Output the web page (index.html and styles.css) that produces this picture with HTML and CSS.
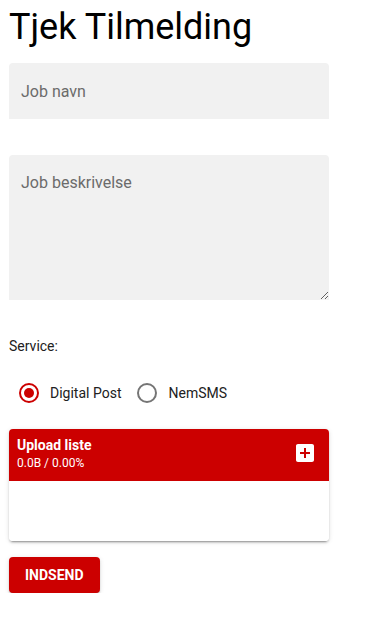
FILE: index.html
```html
<!doctype html>
<html lang="da">
  <head>
    <meta charset="UTF-8" />
    <title>Tjek Tilmelding</title>
    <link rel="stylesheet" href="styles.css">
  </head>
  <body>
    <h1>Tjek Tilmelding</h1>
    <form class="form">
      <input class="field" type="text" placeholder="Job navn" />
      <textarea class="field field-area" placeholder="Job beskrivelse"></textarea>

      <div class="service-label">Service:</div>
      <div class="radio-row">
        <label class="radio">
          <span class="radio-hit"><input type="radio" name="service" checked /></span>
          <span>Digital Post</span>
        </label>
        <label class="radio">
          <span class="radio-hit"><input type="radio" name="service" /></span>
          <span>NemSMS</span>
        </label>
      </div>

      <div class="upload-card">
        <div class="upload-header">
          <div>
            <div class="upload-title">Upload liste</div>
            <div class="upload-progress">0.0B / 0.00%</div>
          </div>
          <button type="button" class="add-button" aria-label="Tilføj fil">
            <svg width="24" height="24" viewBox="0 0 24 24">
              <path fill="#fff" d="M19 3H5c-1.11 0-2 .9-2 2v14c0 1.1.89 2 2 2h14c1.1 0 2-.9 2-2V5c0-1.1-.9-2-2-2zm-2 10h-4v4h-2v-4H7v-2h4V7h2v4h4v2z"/>
            </svg>
          </button>
        </div>
        <div class="upload-body"></div>
      </div>

      <button type="button" class="submit-button">Indsend</button>
    </form>
  </body>
</html>
```

FILE: styles.css
```css
:root {
  --primary-color: #cc0000;
  --field-bg: #f1f1f1;
  --text-color: #212121;
  --placeholder: #6b6b6b;
}

* {
  box-sizing: border-box;
  margin: 0;
  padding: 0;
}

body {
  font-family: Roboto, "Liberation Sans", Arial, sans-serif;
  color: var(--text-color);
  background: white;
  padding: 0 9px;
}

h1 {
  font-size: 36px;
  font-weight: 400;
  line-height: 42px;
  color: black;
  margin-top: 6px;
  margin-bottom: 15px;
}

.form {
  width: 320px;
  display: flex;
  flex-direction: column;
}

.field {
  display: block;
  width: 100%;
  height: 56px;
  border: none;
  border-radius: 4px 4px 0 0;
  background-color: var(--field-bg);
  padding: 0 12px;
  font-family: inherit;
  font-size: 16px;
  color: var(--text-color);
}

.field::placeholder {
  color: var(--placeholder);
}

.field:focus {
  outline: none;
}

.field-area {
  height: 145px;
  margin-top: 36px;
  padding-top: 18px;
  line-height: 19px;
}

.service-label {
  font-size: 14px;
  line-height: 20px;
  margin-top: 36px;
}

.radio-row {
  display: flex;
  gap: 6px;
  margin-top: 17px;
  font-size: 14px;
}

.radio {
  display: flex;
  align-items: center;
  height: 40px;
  cursor: pointer;
}

.radio-hit {
  width: 40px;
  height: 40px;
  display: flex;
  align-items: center;
  justify-content: center;
  margin-right: 1px;
}

.radio input {
  appearance: none;
  width: 20px;
  height: 20px;
  border: 2px solid #757575;
  border-radius: 50%;
  display: grid;
  place-items: center;
  margin: 0;
}

.radio input:checked {
  border-color: var(--primary-color);
}

.radio input:checked::after {
  content: "";
  width: 10px;
  height: 10px;
  border-radius: 50%;
  background: var(--primary-color);
}

.upload-card {
  margin-top: 16px;
  border-radius: 4px;
  overflow: hidden;
  box-shadow: 0 3px 1px -2px rgba(0, 0, 0, 0.2), 0 2px 2px 0 rgba(0, 0, 0, 0.14),
    0 1px 5px 0 rgba(0, 0, 0, 0.12);
}

.upload-header {
  background: var(--primary-color);
  color: white;
  height: 52px;
  padding: 6px 12px 10px 8px;
  display: flex;
  justify-content: space-between;
  align-items: center;
}

.upload-title {
  font-size: 14px;
  font-weight: 700;
  line-height: 20px;
}

.upload-progress {
  font-size: 12px;
  line-height: 16px;
}

.add-button {
  background: none;
  border: none;
  width: 24px;
  height: 24px;
  display: flex;
  cursor: pointer;
}

.upload-body {
  height: 60px;
  background: white;
}

.submit-button {
  align-self: flex-start;
  margin-top: 16px;
  height: 36px;
  padding: 0 16px;
  border: none;
  border-radius: 4px;
  background: var(--primary-color);
  color: white;
  font-family: inherit;
  font-size: 14px;
  font-weight: 700;
  letter-spacing: 0;
  text-transform: uppercase;
  box-shadow: 0 3px 1px -2px rgba(0, 0, 0, 0.2), 0 2px 2px 0 rgba(0, 0, 0, 0.14),
    0 1px 5px 0 rgba(0, 0, 0, 0.12);
  cursor: pointer;
}
```
